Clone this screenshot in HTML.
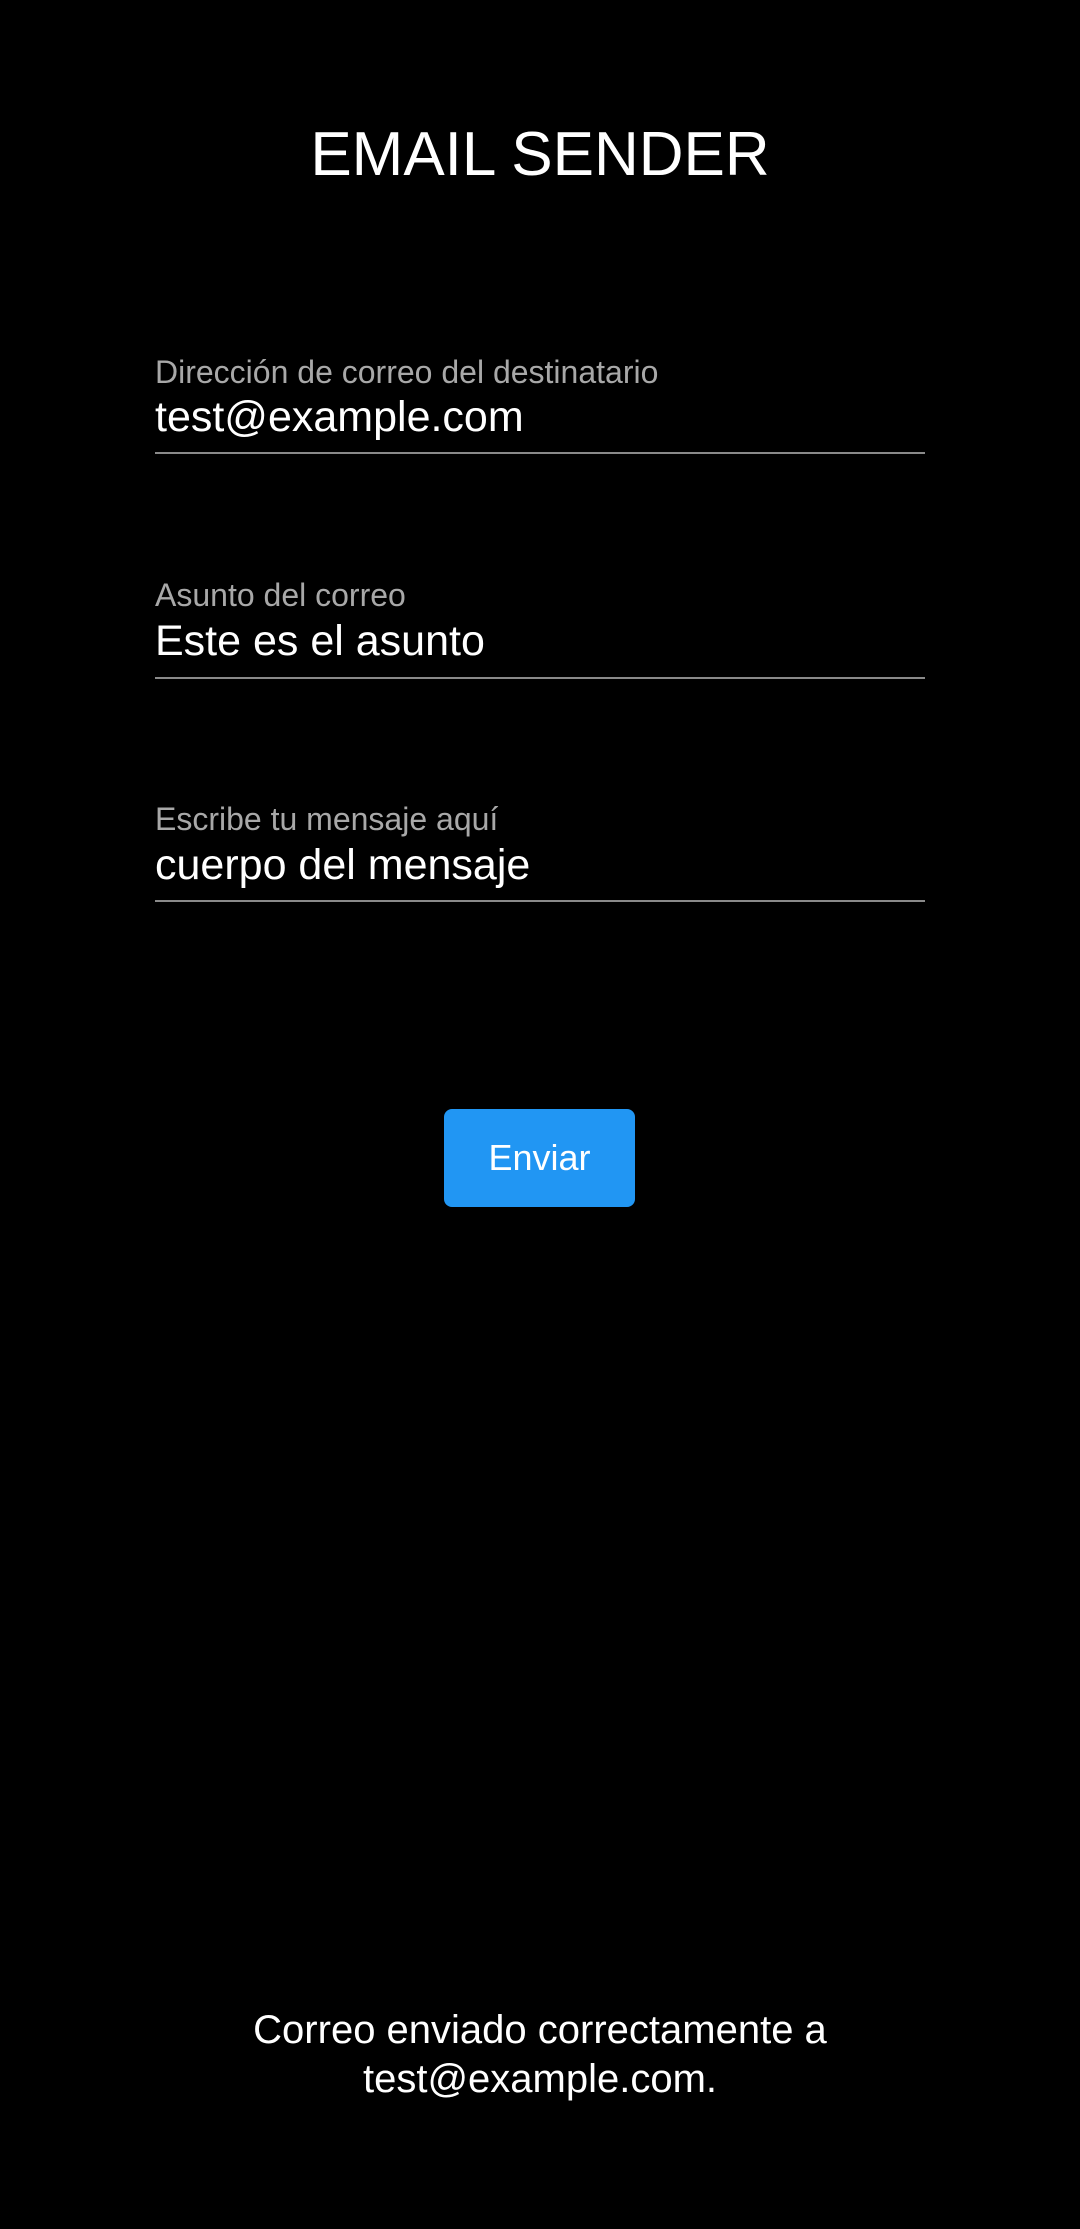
<!DOCTYPE html>
<html><head><meta charset="utf-8"><style>
html,body{margin:0;padding:0;background:#000;}
body{width:1080px;height:2229px;position:relative;overflow:hidden;font-family:"Liberation Sans",sans-serif;color:#fff;}
.a{position:absolute;white-space:nowrap;line-height:1;}
.c{left:0;width:1080px;text-align:center;}
.lbl{color:#a8a8a8;font-size:32px;left:155px;}
.val{font-size:43px;left:155px;}
.line{position:absolute;left:155px;width:770px;height:2px;background:#8a8a8a;}
.btn{position:absolute;left:444px;top:1109px;width:191px;height:98px;background:#2196F3;border-radius:8px;color:#fff;font-size:36px;display:flex;align-items:center;justify-content:center;}
</style></head><body>
<div class="a c" style="top:124px;font-size:62px;">EMAIL SENDER</div>

<div class="a lbl" style="top:356px;">Dirección de correo del destinatario</div>
<div class="a val" style="top:396px;">test@example.com</div>
<div class="line" style="top:452px;"></div>

<div class="a lbl" style="top:579px;">Asunto del correo</div>
<div class="a val" style="top:620px;">Este es el asunto</div>
<div class="line" style="top:677px;"></div>

<div class="a lbl" style="top:803px;">Escribe tu mensaje aquí</div>
<div class="a val" style="top:844px;">cuerpo del mensaje</div>
<div class="line" style="top:900px;"></div>

<div class="btn">Enviar</div>

<div class="a c" style="top:2010px;font-size:40px;">Correo enviado correctamente a</div>
<div class="a c" style="top:2059px;font-size:40px;">test@example.com.</div>
</body></html>
